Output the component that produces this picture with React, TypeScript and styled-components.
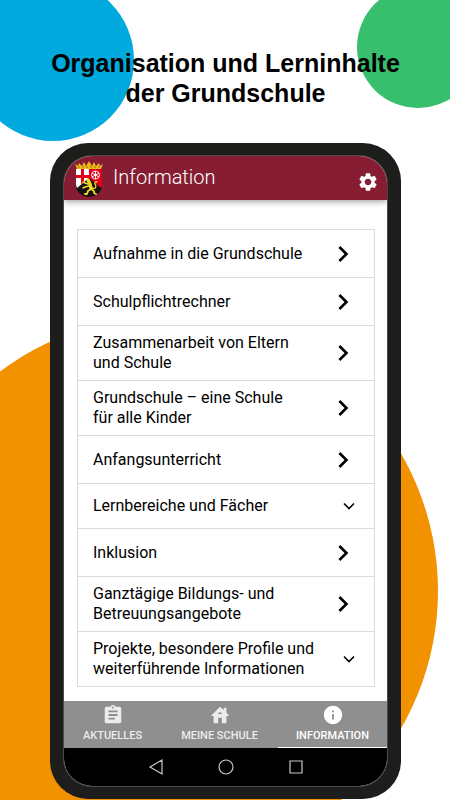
import React from "react";
import styled, { createGlobalStyle } from "styled-components";

const GlobalStyle = createGlobalStyle`
  *, *::before, *::after { box-sizing: border-box; }
  body { margin: 0; background: #fff; color: #000; font-family: Roboto, sans-serif; }
  button { font: inherit; color: inherit; background: none; border: 0; padding: 0; cursor: pointer; }
  svg { display: block; }
`;

const Page = styled.div`
  position: relative;
  overflow: hidden;
  min-height: 100vh;
  background: #fff;
`;

const Disc = styled.div<{ $x: number; $y: number; $r: number; $color: string }>`
  position: absolute;
  left: ${(p) => p.$x - p.$r}px;
  top: ${(p) => p.$y - p.$r}px;
  width: ${(p) => p.$r * 2}px;
  height: ${(p) => p.$r * 2}px;
  border-radius: 50%;
  background: ${(p) => p.$color};
`;

const Content = styled.div`
  position: relative;
  display: flex;
  flex-direction: column;
  min-height: 100vh;
  padding: 48px 49px 1px 50px;
`;

const Title = styled.h1`
  margin: 0 -20px 35px;
  font: bold 25px/30px "Liberation Sans", Arial, sans-serif;
  text-align: center;
`;

const Phone = styled.div`
  flex: 1;
  display: flex;
  padding: 13px 14px;
  border-radius: 38px;
  background: #1d1d1b;
`;

const Screen = styled.div`
  flex: 1;
  display: flex;
  flex-direction: column;
  overflow: hidden;
  border-radius: 28px;
  background: #fff;
  box-shadow: 0 0 0 1px #4a4a4a;
`;

const AppBar = styled.header`
  display: flex;
  align-items: center;
  gap: 9px;
  height: 44px;
  padding: 2px 8px 0 10px;
  background: #861d32;
  color: #fff;
  box-shadow: 0 2px 6px rgba(0, 0, 0, 0.35);
`;

const AppTitle = styled.h2`
  flex: 1;
  margin: 0 0 4px;
  font-size: 20px;
  line-height: 24px;
  font-weight: 300;
`;

const SettingsButton = styled.button`
  margin-top: 6px;
`;

const Main = styled.main`
  flex: 1;
  padding: 29px 12px 14px 13px;
`;

const List = styled.ul`
  margin: 0;
  padding: 0;
  list-style: none;
  border: 1px solid #dcdcdc;
`;

const Item = styled.li`
  & + & { border-top: 1px solid #dcdcdc; }
`;

const RowButton = styled.button<{ $expands: boolean }>`
  display: flex;
  align-items: center;
  justify-content: space-between;
  width: 100%;
  min-height: ${(p) => (p.$expands ? 44 : 47)}px;
  padding: 7px ${(p) => (p.$expands ? 14 : 15)}px 7px 15px;
  font-size: 16px;
  line-height: 20px;
  text-align: left;
  white-space: pre-line;
`;

const Tabs = styled.nav`
  display: grid;
  grid-template-columns: 97fr 117fr 109fr;
  height: 47px;
  background: #8f8f8f;
`;

const Tab = styled.button<{ $active: boolean }>`
  display: flex;
  flex-direction: column;
  align-items: center;
  gap: 3px;
  padding-top: 3px;
  border-bottom: 1px solid ${(p) => (p.$active ? "#fff" : "transparent")};
  color: ${(p) => (p.$active ? "#fff" : "#ececec")};
  font-size: 11px;
  line-height: 14px;
  font-weight: 500;
  white-space: nowrap;
`;

const SystemBar = styled.div`
  display: flex;
  justify-content: center;
  align-items: center;
  gap: 50px;
  height: 38px;
  background: #000;
`;

function Crest() {
  return (
    <svg width="30" height="38" viewBox="0 0 30 38" aria-hidden="true">
      <path d="M2 9h26v16c0 7-5 11-13 12C7 36 2 32 2 25z" fill="#151311" />
      <path d="M2 9h13v9L3 28a12 12 0 0 1-1-4z" fill="#fff" />
      <path d="M7 9h3v6h5v3h-5v4l-3 2v-6H2v-3h5z" fill="#e2001a" />
      <path d="M15 9h13v16c0 1 0 2-1 3L15 18z" fill="#e2001a" />
      <g fill="none" stroke="#fff" strokeWidth="0.9">
        <circle cx="21.5" cy="15" r="4" />
        <circle cx="21.5" cy="15" r="1" />
        <path d="M21.5 11v8M18 13l7 4M25 13l-7 4" />
      </g>
      <path
        d="M3 9L1 4l3 2 1-3 3 3 2-4 2 4 3-5 3 5 2-4 2 4 3-3 1 3 3-2-2 5z"
        fill="#e8b91c"
      />
      <path d="M4 7h22" stroke="#a87b12" strokeWidth="1" strokeDasharray="2 2" />
      <g fill="none" stroke="#f2da2c" strokeLinecap="round" strokeLinejoin="round">
        <path d="M14 20l2 4 1 4" strokeWidth="3.4" />
        <path d="M14 24l-3-1-2-1M15 26l-4 1-2 1" strokeWidth="1.5" />
        <path d="M17 29l-3 2-1 3h-2M17 29l3 2v2l2 1" strokeWidth="1.8" />
        <path d="M18 28c5 2 4-3 3-4s1-3 2-2" strokeWidth="1.3" />
      </g>
    </svg>
  );
}

function GearIcon() {
  return (
    <svg width="22" height="22" viewBox="0 0 24 24" fill="currentColor" aria-hidden="true">
      <path d="M19.14 12.94c.04-.3.06-.61.06-.94 0-.32-.02-.64-.07-.94l2.03-1.58c.18-.14.23-.41.12-.61l-1.92-3.32c-.12-.22-.37-.29-.59-.22l-2.39.96c-.5-.38-1.03-.7-1.62-.94l-.36-2.54c-.04-.24-.24-.41-.48-.41h-3.84c-.24 0-.43.17-.47.41l-.36 2.54c-.59.24-1.13.57-1.62.94l-2.39-.96c-.22-.08-.47 0-.59.22L2.74 8.87c-.12.21-.08.47.12.61l2.03 1.58c-.05.3-.09.63-.09.94s.02.64.07.94l-2.03 1.58c-.18.14-.23.41-.12.61l1.92 3.32c.12.22.37.29.59.22l2.39-.96c.5.38 1.03.7 1.62.94l.36 2.54c.05.24.24.41.48.41h3.84c.24 0 .44-.17.47-.41l.36-2.54c.59-.24 1.13-.56 1.62-.94l2.39.96c.22.08.47 0 .59-.22l1.92-3.32c.12-.22.07-.47-.12-.61l-2.01-1.58zM12 15.6c-1.98 0-3.6-1.62-3.6-3.6s1.62-3.6 3.6-3.6 3.6 1.62 3.6 3.6-1.62 3.6-3.6 3.6z" />
    </svg>
  );
}

function ChevronRight() {
  return (
    <svg width="32" height="32" viewBox="0 0 24 24" aria-hidden="true">
      <path d="M10 6L8.59 7.41 13.17 12l-4.58 4.59L10 18l6-6z" />
    </svg>
  );
}

function ChevronDown() {
  return (
    <svg width="22" height="22" viewBox="0 0 22 22" aria-hidden="true">
      <path d="M6 8.5l5 5 5-5" fill="none" stroke="#000" strokeWidth="1.6" />
    </svg>
  );
}

function ClipboardIcon() {
  return (
    <svg width="22" height="22" viewBox="0 0 24 24" fill="currentColor" aria-hidden="true">
      <path d="M19 3h-4.18C14.4 1.84 13.3 1 12 1c-1.3 0-2.4.84-2.82 2H5c-1.1 0-2 .9-2 2v14c0 1.1.9 2 2 2h14c1.1 0 2-.9 2-2V5c0-1.1-.9-2-2-2zm-7 0c.55 0 1 .45 1 1s-.45 1-1 1-1-.45-1-1 .45-1 1-1zm2 14H7v-2h7v2zm3-4H7v-2h10v2zm0-4H7V7h10v2z" />
    </svg>
  );
}

function HouseIcon() {
  return (
    <svg width="22" height="22" viewBox="0 0 24 24" fill="currentColor" aria-hidden="true">
      <path d="M19 9.3V4h-3v2.6L12 3 2 13h3v8h5v-6h4v6h5v-8h3l-3-3.7zM10 11c0-1.1.9-2 2-2s2 .9 2 2h-4z" />
    </svg>
  );
}

function InfoIcon() {
  return (
    <svg width="22" height="22" viewBox="0 0 24 24" fill="currentColor" aria-hidden="true">
      <path d="M12 2C6.48 2 2 6.48 2 12s4.48 10 10 10 10-4.48 10-10S17.52 2 12 2zm1 15h-2v-6h2v6zm0-8h-2V7h2v2z" />
    </svg>
  );
}

const entries = [
  { label: "Aufnahme in die Grundschule", expands: false },
  { label: "Schulpflichtrechner", expands: false },
  { label: "Zusammenarbeit von Eltern\nund Schule", expands: false },
  { label: "Grundschule – eine Schule\nfür alle Kinder", expands: false },
  { label: "Anfangsunterricht", expands: false },
  { label: "Lernbereiche und Fächer", expands: true },
  { label: "Inklusion", expands: false },
  { label: "Ganztägige Bildungs- und\nBetreuungsangebote", expands: false },
  { label: "Projekte, besondere Profile und\nweiterführende Informationen", expands: true },
];

const tabs = [
  { label: "AKTUELLES", icon: <ClipboardIcon />, active: false },
  { label: "MEINE SCHULE", icon: <HouseIcon />, active: false },
  { label: "INFORMATION", icon: <InfoIcon />, active: true },
];

export default function App() {
  return (
    <Page>
      <GlobalStyle />
      <Disc $x={53} $y={60} $r={81} $color="#00a9de" />
      <Disc $x={418} $y={47} $r={61} $color="#38bf6d" />
      <Disc $x={164} $y={591} $r={274} $color="#f39200" />
      <Content>
        <Title>
          Organisation und Lerninhalte
          <br />
          der Grundschule
        </Title>
        <Phone>
          <Screen>
            <AppBar>
              <Crest />
              <AppTitle>Information</AppTitle>
              <SettingsButton type="button" aria-label="Einstellungen">
                <GearIcon />
              </SettingsButton>
            </AppBar>
            <Main>
              <List>
                {entries.map((entry) => (
                  <Item key={entry.label}>
                    <RowButton type="button" $expands={entry.expands}>
                      {entry.label}
                      {entry.expands ? <ChevronDown /> : <ChevronRight />}
                    </RowButton>
                  </Item>
                ))}
              </List>
            </Main>
            <Tabs>
              {tabs.map((tab) => (
                <Tab key={tab.label} type="button" $active={tab.active}>
                  {tab.icon}
                  {tab.label}
                </Tab>
              ))}
            </Tabs>
            <SystemBar>
              <button type="button" aria-label="Zurück">
                <svg width="20" height="20" viewBox="0 0 20 20" fill="none" stroke="#c8c8c8" strokeWidth="1.2">
                  <path d="M16 3v14L4 10z" />
                </svg>
              </button>
              <button type="button" aria-label="Startbildschirm">
                <svg width="20" height="20" viewBox="0 0 20 20" fill="none" stroke="#c8c8c8" strokeWidth="1.2">
                  <circle cx="10" cy="10" r="7" />
                </svg>
              </button>
              <button type="button" aria-label="Übersicht">
                <svg width="20" height="20" viewBox="0 0 20 20" fill="none" stroke="#c8c8c8" strokeWidth="1.2">
                  <path d="M4 4h12v12H4z" />
                </svg>
              </button>
            </SystemBar>
          </Screen>
        </Phone>
      </Content>
    </Page>
  );
}
